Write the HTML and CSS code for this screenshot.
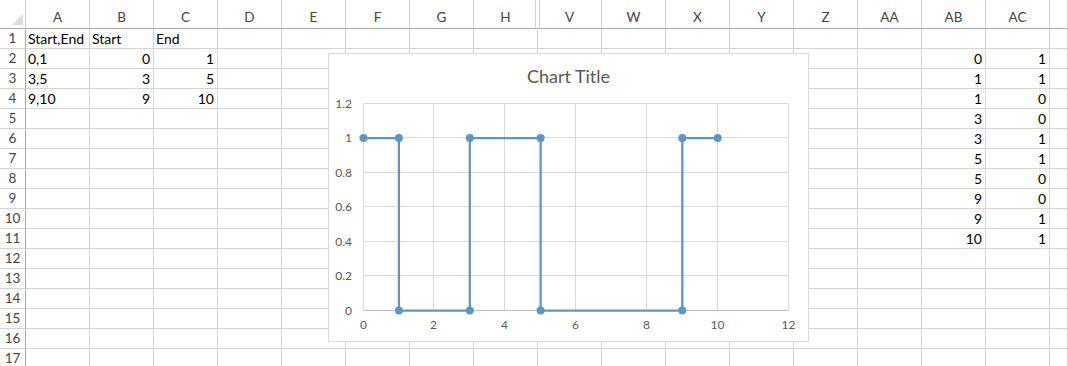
FILE: index.html
```html
<!DOCTYPE html>
<html lang="en">
<head>
    <meta charset="UTF-8">
    <title>Book1 - Excel</title>
    <link rel="stylesheet" href="styles.css">
</head>
<body>
    <!-- Worksheet grid, filled in by script.js -->
    <div id="sheet" class="sheet"></div>

    <!-- Embedded chart floating over the sheet -->
    <div class="chart">
        <div class="chart-title">Chart Title</div>
        <svg class="plot" width="479" height="247" viewBox="0 0 479 247">
            <g class="gridlines">
                <line x1="34.5" y1="9.5" x2="459.5" y2="9.5"/>
                <line x1="34.5" y1="43.5" x2="459.5" y2="43.5"/>
                <line x1="34.5" y1="78.5" x2="459.5" y2="78.5"/>
                <line x1="34.5" y1="112.5" x2="459.5" y2="112.5"/>
                <line x1="34.5" y1="147.5" x2="459.5" y2="147.5"/>
                <line x1="34.5" y1="181.5" x2="459.5" y2="181.5"/>
                <line x1="34.5" y1="9.5" x2="34.5" y2="216.5"/>
                <line x1="104.5" y1="9.5" x2="104.5" y2="216.5"/>
                <line x1="175.5" y1="9.5" x2="175.5" y2="216.5"/>
                <line x1="246.5" y1="9.5" x2="246.5" y2="216.5"/>
                <line x1="317.5" y1="9.5" x2="317.5" y2="216.5"/>
                <line x1="388.5" y1="9.5" x2="388.5" y2="216.5"/>
                <line x1="459.5" y1="9.5" x2="459.5" y2="216.5"/>
            </g>
            <line class="axis" x1="34.5" y1="216.5" x2="459.5" y2="216.5"/>
            <g class="labels y-labels">
                <text x="23" y="13.5">1.2</text>
                <text x="23" y="47.5">1</text>
                <text x="23" y="82.5">0.8</text>
                <text x="23" y="116.5">0.6</text>
                <text x="23" y="151.5">0.4</text>
                <text x="23" y="185.5">0.2</text>
                <text x="23" y="220.5">0</text>
            </g>
            <g class="labels x-labels">
                <text x="34.5" y="235">0</text>
                <text x="104.5" y="235">2</text>
                <text x="175.5" y="235">4</text>
                <text x="246.5" y="235">6</text>
                <text x="317.5" y="235">8</text>
                <text x="388.5" y="235">10</text>
                <text x="459.5" y="235">12</text>
            </g>
            <polyline id="series" class="series" points=""/>
            <g id="markers" class="markers"></g>
        </svg>
    </div>

    <script src="script.js"></script>
</body>
</html>
```

FILE: styles.css
```css
body {
    margin: 0;
    font-family: "Lato", "Liberation Sans", sans-serif;
    font-size: 14px;
    color: #000;
    background-color: white;
    overflow: hidden;
}
.sheet {
    display: grid;
    grid-template-columns: 26px repeat(16, 64px) 1fr;
    grid-template-rows: 29px repeat(17, 20px);
    width: 1068px;
}
.sheet > div {
    box-sizing: border-box;
    border-right: 1px solid #d4d4d4;
    border-bottom: 1px solid #d4d4d4;
    white-space: nowrap;
    overflow: hidden;
    line-height: 19px;
}
/* top left select-all box */
.corner {
    position: relative;
}
.corner::after {
    content: "";
    position: absolute;
    right: 2px;
    bottom: 3px;
    border-left: 11px solid transparent;
    border-bottom: 11px solid #dcdcdc;
}
.sheet > .corner,
.sheet > .col-head {
    border-bottom-color: #ababab;
}
.col-head {
    position: relative;
    text-align: center;
    color: #444;
    padding-top: 8px;
    font-size: 13.5px;
}
/* hidden columns I..U sit between H and V */
.sheet > .col-head.split {
    border-right-color: transparent;
    overflow: visible;
    z-index: 1;
}
.col-head.split::after {
    content: "";
    position: absolute;
    top: 0;
    bottom: 0;
    right: -3px;
    width: 3px;
    border-left: 1px solid #d4d4d4;
    border-right: 1px solid #d4d4d4;
}
.sheet > .row-head {
    text-align: center;
    color: #444;
    border-right-color: #ababab;
    font-size: 13.5px;
}
.cell {
    padding: 0 2px;
}
.cell.num {
    text-align: right;
    padding-right: 3px;
}
/* Chart styling */
.chart {
    position: absolute;
    left: 328px;
    top: 53px;
    width: 481px;
    height: 289px;
    box-sizing: border-box;
    border: 1px solid #d9d9d9;
    background-color: white;
}
.chart-title {
    height: 36px;
    padding-top: 4px;
    line-height: 36px;
    text-align: center;
    font-size: 18px;
    color: #595959;
}
.plot {
    display: block;
}
.gridlines line {
    stroke: #d9d9d9;
    stroke-width: 1;
}
.axis {
    stroke: #bfbfbf;
    stroke-width: 1;
}
.labels text {
    font-family: "Lato", "Liberation Sans", sans-serif;
    font-size: 12px;
    fill: #595959;
}
.y-labels text {
    text-anchor: end;
}
.x-labels text {
    text-anchor: middle;
}
.series {
    fill: none;
    stroke: #5e95c3;
    stroke-width: 2.25;
    stroke-linejoin: round;
}
.markers circle {
    fill: #5e95c3;
}
```

FILE: script.js
```js
// Columns I..U are hidden in the workbook
const cols = ["A", "B", "C", "D", "E", "F", "G", "H", "V", "W", "X", "Y", "Z", "AA", "AB", "AC", ""];

const cells = {
    A1: "Start,End", B1: "Start", C1: "End",
    A2: "0,1", B2: 0, C2: 1,
    A3: "3,5", B3: 3, C3: 5,
    A4: "9,10", B4: 9, C4: 10
};

// step points used by the chart (AB = x, AC = y)
const steps = [[0, 1], [1, 1], [1, 0], [3, 0], [3, 1], [5, 1], [5, 0], [9, 0], [9, 1], [10, 1]];
steps.forEach((p, i) => {
    cells["AB" + (i + 2)] = p[0];
    cells["AC" + (i + 2)] = p[1];
});

const sheet = document.getElementById("sheet");

function add(cls, text) {
    const d = document.createElement("div");
    d.className = cls;
    if (text !== undefined) d.textContent = text;
    sheet.appendChild(d);
    return d;
}

add("corner");
cols.forEach(c => {
    const h = add("col-head", c);
    if (c === "H") h.classList.add("split");
});

for (let r = 1; r <= 17; r++) {
    add("row-head", r);
    cols.forEach(c => {
        const v = c ? cells[c + r] : undefined;
        const d = add("cell", v === undefined ? "" : v);
        if (typeof v === "number") d.classList.add("num");
    });
}

// Draw the series: x 0..12 over 34.5..459.5, y 0..1.2 over 216.5..9.5
const svgNS = "http://www.w3.org/2000/svg";
const xPos = x => 34.5 + x * 425 / 12;
const yPos = y => 216.5 - y * 207 / 1.2;

document.getElementById("series").setAttribute(
    "points",
    steps.map(p => xPos(p[0]).toFixed(1) + "," + yPos(p[1]).toFixed(1)).join(" ")
);

const markers = document.getElementById("markers");
steps.forEach(p => {
    const c = document.createElementNS(svgNS, "circle");
    c.setAttribute("cx", xPos(p[0]).toFixed(1));
    c.setAttribute("cy", yPos(p[1]).toFixed(1));
    c.setAttribute("r", 4);
    markers.appendChild(c);
});
```
